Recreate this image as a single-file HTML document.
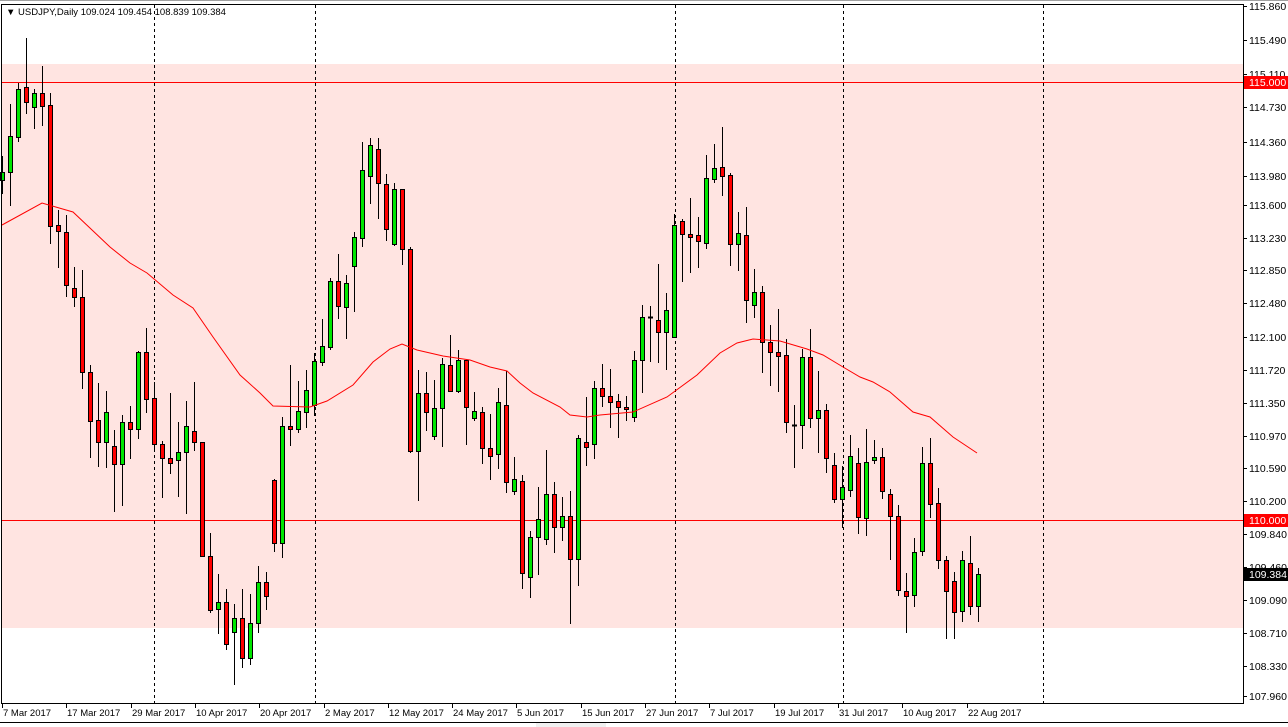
<!DOCTYPE html>
<html><head><meta charset="utf-8"><style>
html,body{margin:0;padding:0;background:#fff;width:1288px;height:727px;overflow:hidden}
svg{display:block;font-family:"Liberation Sans",sans-serif}
</style></head><body>
<svg id="s" width="1288" height="727" viewBox="0 0 1288 727" shape-rendering="crispEdges">
<rect x="0" y="0" width="1288" height="727" fill="#fff"/>
<line x1="0" y1="0.5" x2="1288" y2="0.5" stroke="#a0a0a0"/>
<rect x="2" y="64" width="1241" height="564" fill="#ffe4e1"/>
<g stroke="#000" stroke-dasharray="3,3">
<line x1="154.5" y1="5" x2="154.5" y2="703"/>
<line x1="315.5" y1="5" x2="315.5" y2="703"/>
<line x1="675.5" y1="5" x2="675.5" y2="703"/>
<line x1="843.5" y1="5" x2="843.5" y2="703"/>
<line x1="1043.5" y1="5" x2="1043.5" y2="703"/>
</g>
<line x1="2" y1="82.5" x2="1243" y2="82.5" stroke="#f00"/>
<line x1="2" y1="520.5" x2="1243" y2="520.5" stroke="#f00"/>
<g id="c"></g>
<polyline fill="none" stroke="#f00" stroke-width="1" shape-rendering="auto" points="2,225 42,203 73,212 110,247 130,263 147,273 173,295 193,308 213,337 240,375 260,393 273,406 310,407 327,401 353,385 373,362 390,349 402,344 417,350 443,356 470,360 490,367 507,371 520,383 533,393 560,407 570,415 587,417 600,415 633,412 667,397 697,375 720,353 737,343 753,339 780,341 807,349 823,355 843,367 860,377 873,382 890,392 913,412 930,417 953,437 977,453"/>
<rect x="1.5" y="4.5" width="1242" height="699" fill="none" stroke="#000"/>
<g id="ax" font-size="10.5" fill="#000"></g>
<text x="6" y="15" font-size="9.5" fill="#000">▼ USDJPY,Daily  109.024 109.454 108.839 109.384</text>
<line x1="0" y1="722.5" x2="1288" y2="722.5" stroke="#000"/>
<rect x="536" y="723" width="70" height="4" fill="#f0f0f0"/>
</svg>
<script>
var d=[[0,172,180,156,194,'g'],[1,136,172,104,206,'g'],[2,89,137,83,142,'g'],[3,87,102,38,114,'r'],[4,93,107,89,129,'g'],[5,93,106,66,126,'r'],[6,105,226,93,244,'r'],[7,225,231,210,268,'r'],[8,232,285,215,297,'r'],[9,288,297,267,307,'r'],[10,297,372,270,389,'r'],[11,372,421,365,458,'r'],[12,420,442,383,467,'r'],[13,412,442,391,468,'g'],[14,446,464,430,512,'r'],[15,422,464,415,506,'g'],[16,422,429,406,459,'r'],[17,352,429,351,439,'g'],[18,352,399,328,413,'r'],[19,398,444,382,450,'r'],[20,444,458,441,498,'r'],[21,458,463,393,474,'r'],[22,452,460,422,497,'g'],[23,426,452,401,514,'g'],[24,431,442,382,451,'r'],[25,442,556,442,557,'r'],[26,556,610,533,613,'r'],[27,602,609,574,634,'g'],[28,602,644,589,650,'r'],[29,618,632,604,685,'g'],[30,618,658,589,668,'r'],[31,623,658,594,665,'g'],[32,582,623,566,633,'g'],[33,582,596,572,610,'r'],[34,480,543,479,552,'r'],[35,426,543,417,558,'g'],[36,426,429,365,446,'r'],[37,411,429,381,433,'g'],[38,390,412,370,428,'g'],[39,361,405,353,416,'g'],[40,346,362,319,366,'g'],[41,281,347,278,350,'g'],[42,281,306,254,319,'r'],[43,283,307,275,339,'g'],[44,237,266,232,312,'g'],[45,170,238,142,247,'g'],[46,145,176,138,204,'g'],[47,149,183,138,219,'r'],[48,184,229,174,241,'r'],[49,189,244,183,246,'g'],[50,189,249,189,265,'r'],[51,249,451,247,453,'r'],[52,393,451,370,501,'g'],[53,393,412,372,431,'r'],[54,408,436,380,440,'g'],[55,364,408,358,447,'g'],[56,365,391,335,392,'r'],[57,360,391,350,393,'g'],[58,360,407,360,445,'r'],[59,411,418,392,421,'g'],[60,412,448,407,464,'r'],[61,448,456,414,480,'r'],[62,402,454,388,469,'g'],[63,405,482,371,493,'r'],[64,479,491,457,495,'g'],[65,481,573,475,589,'r'],[66,537,577,531,598,'g'],[67,519,537,487,575,'g'],[68,494,539,450,545,'g'],[69,494,527,482,553,'r'],[70,516,527,497,541,'g'],[71,516,559,491,624,'r'],[72,438,559,435,586,'g'],[73,442,447,397,466,'r'],[74,388,444,381,459,'g'],[75,388,396,364,407,'r'],[76,396,402,369,428,'r'],[77,401,407,394,438,'r'],[78,407,409,396,421,'r'],[79,360,417,351,422,'g'],[80,317,360,305,393,'g'],[81,317,318,306,362,'d'],[82,320,332,264,363,'r'],[83,310,332,293,370,'g'],[84,225,337,214,338,'g'],[85,221,234,219,282,'r'],[86,234,237,198,273,'r'],[87,235,241,217,268,'r'],[88,178,243,155,249,'g'],[89,168,179,144,183,'g'],[90,167,176,127,196,'r'],[91,175,244,173,266,'r'],[92,233,244,212,271,'g'],[93,235,300,207,323,'r'],[94,292,305,269,318,'g'],[95,292,342,286,373,'r'],[96,342,352,325,386,'r'],[97,352,356,309,392,'r'],[98,355,422,339,433,'r'],[99,425,426,405,468,'d'],[100,357,425,349,449,'g'],[101,357,418,329,428,'r'],[102,410,418,371,453,'g'],[103,410,458,404,473,'r'],[104,465,499,453,503,'r'],[105,487,499,466,528,'g'],[106,456,490,435,497,'g'],[107,463,517,448,534,'r'],[108,462,518,429,536,'g'],[109,457,460,440,464,'g'],[110,457,491,448,499,'r'],[111,494,516,489,560,'r'],[112,516,590,505,596,'r'],[113,591,596,573,633,'r'],[114,552,595,538,607,'g'],[115,463,551,447,556,'g'],[116,463,504,438,518,'r'],[117,503,560,488,569,'r'],[118,560,591,556,639,'r'],[119,581,612,572,639,'r'],[120,560,611,551,622,'g'],[121,563,606,536,615,'r'],[122,574,606,568,622,'g']];
var h='';
d.forEach(function(a){var c=2+8*a[0];
h+='<line x1="'+(c+0.5)+'" y1="'+a[3]+'" x2="'+(c+0.5)+'" y2="'+a[4]+'" stroke="#000"/>';
if(a[5]=='d'){h+='<line x1="'+(c-2)+'" y1="'+(a[1]+0.5)+'" x2="'+(c+3)+'" y2="'+(a[1]+0.5)+'" stroke="#000" stroke-width="2"/>';}
else{var ht=Math.max(a[2]-a[1],2);h+='<rect x="'+(c-1.5)+'" y="'+(a[1]+0.5)+'" width="4" height="'+ht+'" fill="'+(a[5]=='g'?'#00e600':'#f00')+'" stroke="#000"/>';}
});
document.getElementById('c').innerHTML=h;
var p=[['115.860',6],['115.490',40],['115.110',74],['114.730',107],['114.360',142],['113.980',176],['113.600',205],['113.230',238],['112.850',270],['112.480',303],['112.100',337],['111.720',370],['111.350',403],['110.970',436],['110.590',468],['110.200',501],['109.840',534],['109.460',567],['109.090',600],['108.710',633],['108.330',666],['107.960',696]];
var g='';
p.forEach(function(a){g+='<line x1="1243" y1="'+(a[1]+0.5)+'" x2="1247" y2="'+(a[1]+0.5)+'" stroke="#000"/><text x="1249" y="'+(a[1]+4)+'">'+a[0]+'</text>';});
[['115.000',82,'#f00','#fff'],['110.000',520,'#f00','#fff'],['109.384',574,'#000','#fff']].forEach(function(a){g+='<rect x="1244" y="'+(a[1]-6)+'" width="44" height="13" fill="'+a[2]+'"/><text x="1249" y="'+(a[1]+4)+'" fill="'+a[3]+'">'+a[0]+'</text>';});
var dl=['7 Mar 2017','17 Mar 2017','29 Mar 2017','10 Apr 2017','20 Apr 2017','2 May 2017','12 May 2017','24 May 2017','5 Jun 2017','15 Jun 2017','27 Jun 2017','7 Jul 2017','19 Jul 2017','31 Jul 2017','10 Aug 2017','22 Aug 2017'];
dl.forEach(function(t,i){var x=Math.round(2+i*64.3);g+='<line x1="'+(x+0.5)+'" y1="703" x2="'+(x+0.5)+'" y2="708" stroke="#000"/><text x="'+(x+1)+'" y="716" font-size="9.5">'+t+'</text>';});
g+='<line x1="1243.5" y1="4" x2="1243.5" y2="703" stroke="#000"/>';
document.getElementById('ax').innerHTML=g;
</script>
</body></html>
